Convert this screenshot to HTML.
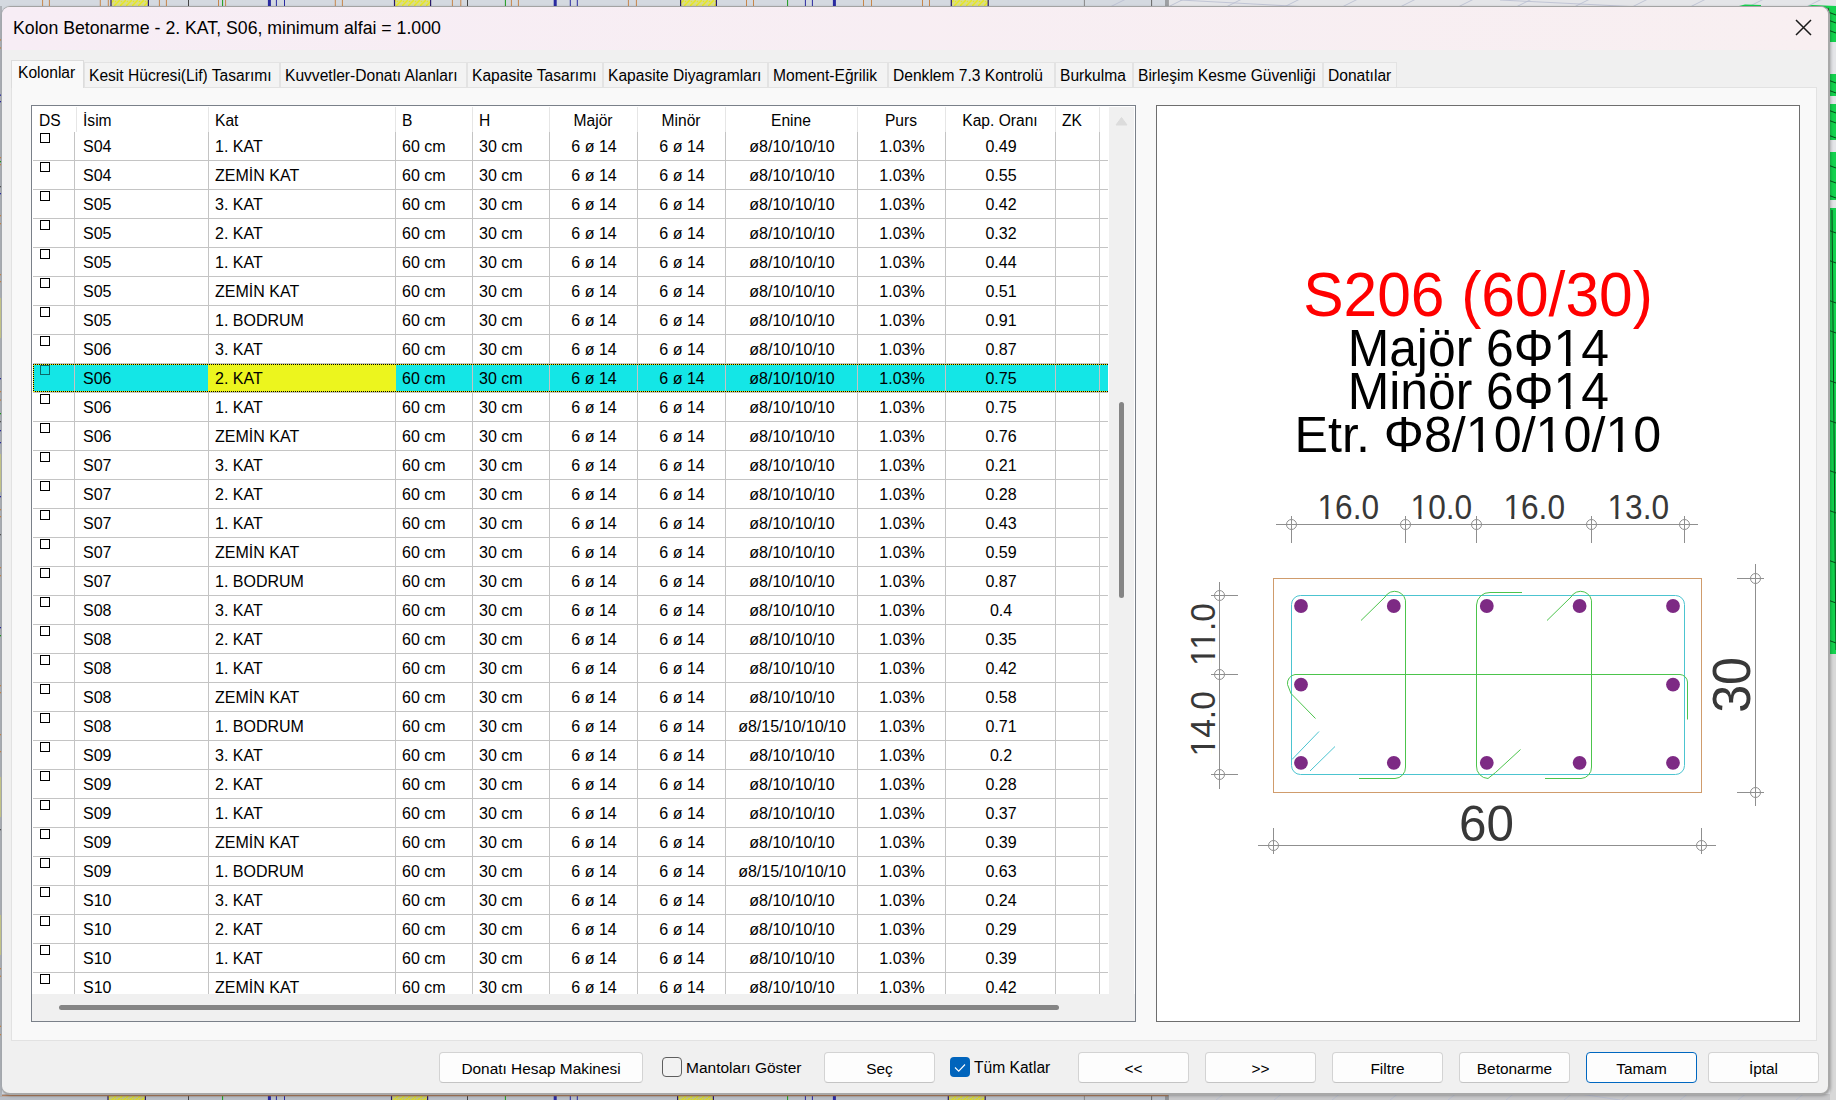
<!DOCTYPE html><html><head><meta charset="utf-8"><style>
*{box-sizing:border-box;margin:0;padding:0}
html,body{width:1836px;height:1100px;overflow:hidden}
body{position:relative;background:#c3c8cf;font-family:"Liberation Sans",sans-serif;color:#000}
.a{position:absolute}
.t{position:absolute;white-space:nowrap}
#dlg{position:absolute;left:1px;top:6px;width:1829px;height:1089px;border-radius:9px;background:#f0f0f0;border:1px solid #a3a3a3;border-right:2px solid #a8a8a8;border-bottom:2px solid #a8a8a8;border-left:1px solid #a3a7ac;box-shadow:1px 1px 3px rgba(0,0,0,.25)}
#title{position:absolute;left:2px;top:7px;width:1826px;height:43px;background:linear-gradient(90deg,#f7edf5,#f8eff1);border-radius:8px 8px 0 0}
.tab{position:absolute;top:62px;height:25px;background:#f3f3f3;border:1px solid #e3e3e3;border-bottom:none;font-size:15.6px;line-height:25px;white-space:nowrap}
.tab.sel{top:60px;height:28px;line-height:24px;background:#f9f9f9;border-color:#dcdcdc;z-index:2}
#panel{position:absolute;left:11px;top:87px;width:1806px;height:954px;background:#f9f9f9;border:1px solid #e2e2e2}
#grid{position:absolute;left:31px;top:105px;width:1105px;height:917px;border:1px solid #7a8089;background:#fff;overflow:hidden}
.row{position:absolute;left:33px;width:1075px;height:29px;font-size:16px;line-height:28px}
.hl{position:absolute;left:33px;width:1075px;height:1px;background:#c4c4c4}
.vl{position:absolute;width:1px;background:#c4c4c4}
.hv{position:absolute;top:107px;width:1px;height:25px;background:#e6e6e6}
.hd{position:absolute;top:108px;font-size:15.6px;line-height:25px;white-space:nowrap}
.c{position:absolute;white-space:nowrap;font-size:16px;line-height:28px}
.cb{position:absolute;width:10px;height:10px;border:1px solid #000}
.btn{position:absolute;top:1052px;height:31px;background:#fdfdfd;border:1px solid #d3d3d3;border-bottom-color:#c4c4c4;border-radius:4px;font-size:15.4px;line-height:31px;text-align:center;white-space:nowrap}
</style></head><body>
<svg class="a" style="left:0;top:0" width="1836" height="1100">
<defs><pattern id="hat" width="6" height="6" patternUnits="userSpaceOnUse"><rect width="6" height="6" fill="#d9dc8a"/><path d="M0 6L6 0" stroke="#e8e820" stroke-width="1.5"/><circle cx="1.5" cy="1.5" r=".8" fill="#e8e820"/></pattern><pattern id="hat2" width="6" height="6" patternUnits="userSpaceOnUse"><rect width="6" height="6" fill="#c2c47e"/><path d="M0 6L6 0" stroke="#dada20" stroke-width="1.5"/><circle cx="1.5" cy="1.5" r=".8" fill="#dada20"/></pattern></defs>
<rect x="0" y="0" width="1836" height="1100" fill="#d4d9e0"/>
<rect x="1168" y="0" width="668" height="1100" fill="#e4e5e8"/>
<rect x="0" y="1094" width="1168" height="6" fill="#b9bec6"/>
<rect x="1168" y="1094" width="668" height="6" fill="#c8c8ca"/>
<rect x="1830" y="650" width="6" height="450" fill="#d8d8d8"/>
<path d="M1100 12L1140 -8M1100 1100L1125 1080" stroke="#b8bcd0" stroke-width="0.8"/>
<path d="M1158 12L1198 -8M1158 1100L1183 1080" stroke="#b8bcd0" stroke-width="0.8"/>
<path d="M1216 12L1256 -8M1216 1100L1241 1080" stroke="#b8bcd0" stroke-width="0.8"/>
<path d="M1274 12L1314 -8M1274 1100L1299 1080" stroke="#b8bcd0" stroke-width="0.8"/>
<path d="M1332 12L1372 -8M1332 1100L1357 1080" stroke="#b8bcd0" stroke-width="0.8"/>
<path d="M1390 12L1430 -8M1390 1100L1415 1080" stroke="#b8bcd0" stroke-width="0.8"/>
<path d="M1448 12L1488 -8M1448 1100L1473 1080" stroke="#b8bcd0" stroke-width="0.8"/>
<path d="M1506 12L1546 -8M1506 1100L1531 1080" stroke="#b8bcd0" stroke-width="0.8"/>
<path d="M1564 12L1604 -8M1564 1100L1589 1080" stroke="#b8bcd0" stroke-width="0.8"/>
<path d="M1622 12L1662 -8M1622 1100L1647 1080" stroke="#b8bcd0" stroke-width="0.8"/>
<path d="M1680 12L1720 -8M1680 1100L1705 1080" stroke="#b8bcd0" stroke-width="0.8"/>
<path d="M1738 12L1778 -8M1738 1100L1763 1080" stroke="#b8bcd0" stroke-width="0.8"/>
<path d="M1796 12L1836 -8M1796 1100L1821 1080" stroke="#b8bcd0" stroke-width="0.8"/>
<path d="M1854 12L1894 -8M1854 1100L1879 1080" stroke="#b8bcd0" stroke-width="0.8"/>
<path d="M1912 12L1952 -8M1912 1100L1937 1080" stroke="#b8bcd0" stroke-width="0.8"/>
<path d="M1970 12L2010 -8M1970 1100L1995 1080" stroke="#b8bcd0" stroke-width="0.8"/>
<path d="M2028 12L2068 -8M2028 1100L2053 1080" stroke="#b8bcd0" stroke-width="0.8"/>
<path d="M2086 12L2126 -8M2086 1100L2111 1080" stroke="#b8bcd0" stroke-width="0.8"/>
<path d="M2144 12L2184 -8M2144 1100L2169 1080" stroke="#b8bcd0" stroke-width="0.8"/>
<path d="M2202 12L2242 -8M2202 1100L2227 1080" stroke="#b8bcd0" stroke-width="0.8"/>
<path d="M2260 12L2300 -8M2260 1100L2285 1080" stroke="#b8bcd0" stroke-width="0.8"/>
<path d="M2318 12L2358 -8M2318 1100L2343 1080" stroke="#b8bcd0" stroke-width="0.8"/>
<path d="M2376 12L2416 -8M2376 1100L2401 1080" stroke="#b8bcd0" stroke-width="0.8"/>
<path d="M2434 12L2474 -8M2434 1100L2459 1080" stroke="#b8bcd0" stroke-width="0.8"/>
<path d="M2492 12L2532 -8M2492 1100L2517 1080" stroke="#b8bcd0" stroke-width="0.8"/>
<path d="M2550 12L2590 -8M2550 1100L2575 1080" stroke="#b8bcd0" stroke-width="0.8"/>
<path d="M2608 12L2648 -8M2608 1100L2633 1080" stroke="#b8bcd0" stroke-width="0.8"/>
<path d="M2666 12L2706 -8M2666 1100L2691 1080" stroke="#b8bcd0" stroke-width="0.8"/>
<path d="M2724 12L2764 -8M2724 1100L2749 1080" stroke="#b8bcd0" stroke-width="0.8"/>
<path d="M2782 12L2822 -8M2782 1100L2807 1080" stroke="#b8bcd0" stroke-width="0.8"/>
<path d="M1180 0L1400 12M1500 0L1700 10M1540 1088L1620 1100" stroke="#b8bcd0" stroke-width="0.8"/>
<path d="M42.6 0V8" stroke="#c8864a" stroke-width="1"/>
<path d="M49.4 0V8" stroke="#c8864a" stroke-width="1"/>
<path d="M100.3 0V8" stroke="#c8864a" stroke-width="1"/>
<path d="M108.3 0V8" stroke="#c8864a" stroke-width="1"/>
<path d="M159.4 0V8" stroke="#c8864a" stroke-width="1"/>
<path d="M166.4 0V8" stroke="#c8864a" stroke-width="1"/>
<path d="M218.5 0V8" stroke="#c8864a" stroke-width="1"/>
<path d="M225.6 0V8" stroke="#c8864a" stroke-width="1"/>
<path d="M335.3 0V8" stroke="#c8864a" stroke-width="1"/>
<path d="M342.4 0V8" stroke="#c8864a" stroke-width="1"/>
<path d="M452.4 0V8" stroke="#c8864a" stroke-width="1"/>
<path d="M460.8 0V8" stroke="#c8864a" stroke-width="1"/>
<path d="M511.4 0V8" stroke="#c8864a" stroke-width="1"/>
<path d="M518.4 0V8" stroke="#c8864a" stroke-width="1"/>
<path d="M628.4 0V8" stroke="#c8864a" stroke-width="1"/>
<path d="M636.4 0V8" stroke="#c8864a" stroke-width="1"/>
<path d="M746.5 0V8" stroke="#c8864a" stroke-width="1"/>
<path d="M753.5 0V8" stroke="#c8864a" stroke-width="1"/>
<path d="M863.5 0V8" stroke="#c8864a" stroke-width="1"/>
<path d="M871.5 0V8" stroke="#c8864a" stroke-width="1"/>
<path d="M922.5 0V8" stroke="#c8864a" stroke-width="1"/>
<path d="M929.5 0V8" stroke="#c8864a" stroke-width="1"/>
<rect x="111" y="-1" width="37.400000000000006" height="9" fill="url(#hat)" stroke="#2a1a6a" stroke-width="1.2"/>
<rect x="108" y="1092" width="37.400000000000006" height="10" fill="url(#hat2)" stroke="#2a1a6a" stroke-width="1.2"/>
<rect x="394.5" y="-1" width="36.10000000000002" height="9" fill="url(#hat)" stroke="#2a1a6a" stroke-width="1.2"/>
<rect x="391.5" y="1092" width="36.10000000000002" height="10" fill="url(#hat2)" stroke="#2a1a6a" stroke-width="1.2"/>
<rect x="680.6" y="-1" width="35.799999999999955" height="9" fill="url(#hat)" stroke="#2a1a6a" stroke-width="1.2"/>
<rect x="677.6" y="1092" width="35.799999999999955" height="10" fill="url(#hat2)" stroke="#2a1a6a" stroke-width="1.2"/>
<rect x="951.3" y="-1" width="36.90000000000009" height="9" fill="url(#hat)" stroke="#2a1a6a" stroke-width="1.2"/>
<rect x="948.3" y="1092" width="36.90000000000009" height="10" fill="url(#hat2)" stroke="#2a1a6a" stroke-width="1.2"/>
<path d="M188.5 0V8M188.5 1090V1100" stroke="#444" stroke-width="1"/>
<path d="M222.6 0V8M222.6 1090V1100" stroke="#1a9a1a" stroke-width="1"/>
<path d="M269.4 0V8M269.4 1090V1100" stroke="#2a2aa0" stroke-width="3"/>
<path d="M276.4 0V8M276.4 1090V1100" stroke="#2a2aa0" stroke-width="1"/>
<path d="M284.5 0V8M284.5 1090V1100" stroke="#2a2aa0" stroke-width="1"/>
<path d="M467.5 0V8M467.5 1090V1100" stroke="#444" stroke-width="1"/>
<path d="M505.4 0V8M505.4 1090V1100" stroke="#1a9a1a" stroke-width="1"/>
<path d="M555.2 0V8M555.2 1090V1100" stroke="#2a2aa0" stroke-width="3"/>
<path d="M570.3 0V8M570.3 1090V1100" stroke="#2a2aa0" stroke-width="1"/>
<path d="M577.3 0V8M577.3 1090V1100" stroke="#2a2aa0" stroke-width="1"/>
<path d="M787.6 0V8M787.6 1090V1100" stroke="#1a9a1a" stroke-width="1"/>
<path d="M805.4 0V8M805.4 1090V1100" stroke="#2a2aa0" stroke-width="1"/>
<path d="M812.4 0V8M812.4 1090V1100" stroke="#2a2aa0" stroke-width="1"/>
<path d="M834.4 0V8M834.4 1090V1100" stroke="#2a2aa0" stroke-width="3"/>
<path d="M1084.4 0V8M1084.4 1090V1100" stroke="#888" stroke-width="1"/>
<path d="M1151.6 0V8M1151.6 1090V1100" stroke="#666" stroke-width="1"/>
<path d="M1166 0V8M1166 1090V1100" stroke="#666" stroke-width="1"/>
<path d="M1168 0V8M1168 1090V1100" stroke="#666" stroke-width="1"/>
<path d="M0 1095.5H1168" stroke="#b08060" stroke-width="1.5"/>
<rect x="1829" y="8" width="7" height="34" fill="#14d24e"/>
<rect x="1829" y="74" width="7" height="22" fill="#14d24e"/>
<rect x="1829" y="104" width="7" height="36" fill="#14d24e"/>
<rect x="1829" y="152" width="7" height="48" fill="#14d24e"/>
<rect x="1829" y="208" width="7" height="446" fill="#14d24e"/>
<path d="M1828 12L1836 15" stroke="#0a4a1a" stroke-width="1"/>
<path d="M1828 20L1836 23" stroke="#0a4a1a" stroke-width="1"/>
<path d="M1828 30L1836 33" stroke="#0a4a1a" stroke-width="1"/>
<path d="M1828 80L1836 83" stroke="#0a4a1a" stroke-width="1"/>
<path d="M1828 90L1836 93" stroke="#0a4a1a" stroke-width="1"/>
<path d="M1828 110L1836 113" stroke="#0a4a1a" stroke-width="1"/>
<path d="M1828 120L1836 123" stroke="#0a4a1a" stroke-width="1"/>
<path d="M1828 135L1836 138" stroke="#0a4a1a" stroke-width="1"/>
<path d="M1828 165L1836 168" stroke="#0a4a1a" stroke-width="1"/>
<path d="M1828 180L1836 183" stroke="#0a4a1a" stroke-width="1"/>
<path d="M1828 195L1836 198" stroke="#0a4a1a" stroke-width="1"/>
<path d="M1828 230L1836 233" stroke="#0a4a1a" stroke-width="1"/>
<path d="M1828 260L1836 263" stroke="#0a4a1a" stroke-width="1"/>
<path d="M1828 300L1836 303" stroke="#0a4a1a" stroke-width="1"/>
<path d="M1828 330L1836 333" stroke="#0a4a1a" stroke-width="1"/>
<path d="M1828 380L1836 383" stroke="#0a4a1a" stroke-width="1"/>
<path d="M1828 420L1836 423" stroke="#0a4a1a" stroke-width="1"/>
<path d="M1828 470L1836 473" stroke="#0a4a1a" stroke-width="1"/>
<path d="M1828 510L1836 513" stroke="#0a4a1a" stroke-width="1"/>
<path d="M1828 560L1836 563" stroke="#0a4a1a" stroke-width="1"/>
<path d="M1828 600L1836 603" stroke="#0a4a1a" stroke-width="1"/>
<path d="M1828 640L1836 643" stroke="#0a4a1a" stroke-width="1"/>
<path d="M1832 210L1836 650" stroke="#0a4a1a" stroke-width="1"/>
<path d="M1737 6.5L1745 4.5L1761 5L1761 6.5Z" fill="#14d24e"/>
<path d="M1806 6.5L1812 5L1836 6L1836 9L1828 9Z" fill="#14d24e"/>
<path d="M1828.5 8V654" stroke="#3a5a3a" stroke-width="1"/>
<rect x="0" y="6" width="2" height="1090" fill="#aeb2b8"/>
<rect x="0" y="39.3" width="2" height="1.3" fill="#c8864a"/>
<rect x="0" y="47.3" width="2" height="1.3" fill="#c8864a"/>
<rect x="0" y="94.5" width="2" height="1.3" fill="#2a2aa0"/>
<rect x="0" y="101" width="2" height="1.3" fill="#2a2aa0"/>
<rect x="0" y="157" width="2" height="1.3" fill="#c8864a"/>
<rect x="0" y="164" width="2" height="1.3" fill="#c8864a"/>
<rect x="0" y="161" width="2" height="1.3" fill="#1a9a1a"/>
<rect x="0" y="186" width="2" height="1.3" fill="#555"/>
<rect x="0" y="193" width="2" height="1.3" fill="#2a2aa0"/>
<rect x="0" y="215" width="2" height="1.3" fill="#c8864a"/>
<rect x="0" y="223" width="2" height="1.3" fill="#c8864a"/>
<rect x="0" y="274" width="2" height="1.3" fill="#c8864a"/>
<rect x="0" y="281" width="2" height="1.3" fill="#c8864a"/>
<rect x="0" y="378" width="2" height="1.3" fill="#2a2aa0"/>
<rect x="0" y="391" width="2" height="1.3" fill="#c8864a"/>
<rect x="0" y="399.4" width="2" height="1.3" fill="#c8864a"/>
<rect x="0" y="413" width="2" height="1.3" fill="#1a9a1a"/>
<rect x="0" y="421" width="2" height="1.3" fill="#555"/>
<rect x="0" y="430" width="2" height="1.3" fill="#2a2aa0"/>
<rect x="0" y="442" width="2" height="1.3" fill="#2a2aa0"/>
<rect x="0" y="496" width="2" height="1.3" fill="#2a2aa0"/>
<rect x="0" y="509" width="2" height="1.3" fill="#c8864a"/>
<rect x="0" y="516" width="2" height="1.3" fill="#c8864a"/>
<rect x="0" y="534" width="2" height="1.3" fill="#555"/>
<rect x="0" y="567" width="2" height="1.3" fill="#c8864a"/>
<rect x="0" y="575" width="2" height="1.3" fill="#c8864a"/>
<rect x="0" y="627" width="2" height="1.3" fill="#2a2aa0"/>
<rect x="0" y="635" width="2" height="1.3" fill="#1a9a1a"/>
<rect x="0" y="685" width="2" height="1.3" fill="#c8864a"/>
<rect x="0" y="692" width="2" height="1.3" fill="#c8864a"/>
<rect x="0" y="734" width="2" height="1.3" fill="#c8864a"/>
<rect x="0" y="751" width="2" height="1.3" fill="#c8864a"/>
<rect x="0" y="829" width="2" height="1.3" fill="#555"/>
<rect x="0" y="968" width="2" height="1.3" fill="#c8864a"/>
<rect x="0" y="975.6" width="2" height="1.3" fill="#c8864a"/>
<rect x="0" y="1025.7" width="2" height="1.3" fill="#c8864a"/>
<rect x="0" y="1034" width="2" height="1.3" fill="#c8864a"/>
<rect x="0" y="298" width="2" height="40" fill="#c9c98a"/>
<rect x="0" y="454" width="2" height="38" fill="#c9c98a"/>
<rect x="0" y="777" width="2" height="40" fill="#c9c98a"/>
<rect x="0" y="915" width="2" height="40" fill="#c9c98a"/>
</svg>
<div id="dlg"></div>
<div id="title"></div>
<div class="t" style="left:13px;top:18px;font-size:17.7px;line-height:20px">Kolon Betonarme - 2. KAT, S06, minimum alfai = 1.000</div>
<svg class="a" style="left:1795px;top:19px" width="17" height="17"><path d="M1 1L16 16M16 1L1 16" stroke="#1a1a1a" stroke-width="1.5"/></svg>
<div id="panel"></div>
<div class="tab sel" style="left:11px;width:73px;padding-left:6px">Kolonlar</div>
<div class="tab" style="left:84px;width:196px;padding-left:4px">Kesit Hücresi(Lif) Tasarımı</div>
<div class="tab" style="left:280px;width:187px;padding-left:4px">Kuvvetler-Donatı Alanları</div>
<div class="tab" style="left:467px;width:136px;padding-left:4px">Kapasite Tasarımı</div>
<div class="tab" style="left:603px;width:165px;padding-left:4px">Kapasite Diyagramları</div>
<div class="tab" style="left:768px;width:120px;padding-left:4px">Moment-Eğrilik</div>
<div class="tab" style="left:888px;width:167px;padding-left:4px">Denklem 7.3 Kontrolü</div>
<div class="tab" style="left:1055px;width:78px;padding-left:4px">Burkulma</div>
<div class="tab" style="left:1133px;width:190px;padding-left:4px">Birleşim Kesme Güvenliği</div>
<div class="tab" style="left:1323px;width:74px;padding-left:4px">Donatılar</div>
<div id="grid"></div>
<div class="hd" style="left:39px">DS</div>
<div class="hd" style="left:83px">İsim</div>
<div class="hd" style="left:215px">Kat</div>
<div class="hd" style="left:402px">B</div>
<div class="hd" style="left:479px">H</div>
<div class="hd" style="left:549px;width:88px;text-align:center">Majör</div>
<div class="hd" style="left:637px;width:88px;text-align:center">Minör</div>
<div class="hd" style="left:725px;width:132px;text-align:center">Enine</div>
<div class="hd" style="left:857px;width:88px;text-align:center">Purs</div>
<div class="hd" style="left:945px;width:110px;text-align:center">Kap. Oranı</div>
<div class="hd" style="left:1062px">ZK</div>
<div class="hv" style="left:76px"></div>
<div class="hv" style="left:208px"></div>
<div class="hv" style="left:395px"></div>
<div class="hv" style="left:472px"></div>
<div class="hv" style="left:549px"></div>
<div class="hv" style="left:637px"></div>
<div class="hv" style="left:725px"></div>
<div class="hv" style="left:857px"></div>
<div class="hv" style="left:945px"></div>
<div class="hv" style="left:1055px"></div>
<div class="hv" style="left:1099px"></div>
<div class="a" style="left:33px;top:364px;width:1075px;height:28px;background:#14e6e6"></div>
<div class="a" style="left:209px;top:364px;width:186px;height:28px;background:#eef51e"></div>
<div class="vl" style="left:74px;top:132px;height:862px"></div>
<div class="vl" style="left:208px;top:132px;height:862px"></div>
<div class="vl" style="left:395px;top:132px;height:862px"></div>
<div class="vl" style="left:472px;top:132px;height:862px"></div>
<div class="vl" style="left:549px;top:132px;height:862px"></div>
<div class="vl" style="left:637px;top:132px;height:862px"></div>
<div class="vl" style="left:725px;top:132px;height:862px"></div>
<div class="vl" style="left:857px;top:132px;height:862px"></div>
<div class="vl" style="left:945px;top:132px;height:862px"></div>
<div class="vl" style="left:1055px;top:132px;height:862px"></div>
<div class="vl" style="left:1099px;top:132px;height:862px"></div>
<div class="hl" style="top:160px"></div>
<div class="hl" style="top:189px"></div>
<div class="hl" style="top:218px"></div>
<div class="hl" style="top:247px"></div>
<div class="hl" style="top:276px"></div>
<div class="hl" style="top:305px"></div>
<div class="hl" style="top:334px"></div>
<div class="hl" style="top:363px"></div>
<div class="hl" style="top:392px"></div>
<div class="hl" style="top:421px"></div>
<div class="hl" style="top:450px"></div>
<div class="hl" style="top:479px"></div>
<div class="hl" style="top:508px"></div>
<div class="hl" style="top:537px"></div>
<div class="hl" style="top:566px"></div>
<div class="hl" style="top:595px"></div>
<div class="hl" style="top:624px"></div>
<div class="hl" style="top:653px"></div>
<div class="hl" style="top:682px"></div>
<div class="hl" style="top:711px"></div>
<div class="hl" style="top:740px"></div>
<div class="hl" style="top:769px"></div>
<div class="hl" style="top:798px"></div>
<div class="hl" style="top:827px"></div>
<div class="hl" style="top:856px"></div>
<div class="hl" style="top:885px"></div>
<div class="hl" style="top:914px"></div>
<div class="hl" style="top:943px"></div>
<div class="hl" style="top:972px"></div>
<div class="a" style="left:208px;top:364px;width:188px;height:28px;background:#ecf51e"></div>
<div class="a" style="left:33px;top:364px;width:1075px;height:1px;background:repeating-linear-gradient(90deg,#000 0 1px,#f0f000 1px 2px)"></div>
<div class="a" style="left:33px;top:391px;width:1075px;height:1px;background:repeating-linear-gradient(90deg,#000 0 1px,#f0f000 1px 2px)"></div>
<div class="a" style="left:33px;top:364px;width:1px;height:28px;background:repeating-linear-gradient(180deg,#000 0 1px,#f0f000 1px 2px)"></div>
<div class="cb" style="left:40px;top:133px;border-color:#000"></div>
<div class="c" style="left:83px;top:133px">S04</div>
<div class="c" style="left:215px;top:133px">1. KAT</div>
<div class="c" style="left:402px;top:133px">60 cm</div>
<div class="c" style="left:479px;top:133px">30 cm</div>
<div class="c" style="left:550px;width:88px;top:133px;text-align:center">6 ø 14</div>
<div class="c" style="left:638px;width:88px;top:133px;text-align:center">6 ø 14</div>
<div class="c" style="left:726px;width:132px;top:133px;text-align:center">ø8/10/10/10</div>
<div class="c" style="left:858px;width:88px;top:133px;text-align:center">1.03%</div>
<div class="c" style="left:946px;width:110px;top:133px;text-align:center">0.49</div>
<div class="cb" style="left:40px;top:162px;border-color:#000"></div>
<div class="c" style="left:83px;top:162px">S04</div>
<div class="c" style="left:215px;top:162px">ZEMİN KAT</div>
<div class="c" style="left:402px;top:162px">60 cm</div>
<div class="c" style="left:479px;top:162px">30 cm</div>
<div class="c" style="left:550px;width:88px;top:162px;text-align:center">6 ø 14</div>
<div class="c" style="left:638px;width:88px;top:162px;text-align:center">6 ø 14</div>
<div class="c" style="left:726px;width:132px;top:162px;text-align:center">ø8/10/10/10</div>
<div class="c" style="left:858px;width:88px;top:162px;text-align:center">1.03%</div>
<div class="c" style="left:946px;width:110px;top:162px;text-align:center">0.55</div>
<div class="cb" style="left:40px;top:191px;border-color:#000"></div>
<div class="c" style="left:83px;top:191px">S05</div>
<div class="c" style="left:215px;top:191px">3. KAT</div>
<div class="c" style="left:402px;top:191px">60 cm</div>
<div class="c" style="left:479px;top:191px">30 cm</div>
<div class="c" style="left:550px;width:88px;top:191px;text-align:center">6 ø 14</div>
<div class="c" style="left:638px;width:88px;top:191px;text-align:center">6 ø 14</div>
<div class="c" style="left:726px;width:132px;top:191px;text-align:center">ø8/10/10/10</div>
<div class="c" style="left:858px;width:88px;top:191px;text-align:center">1.03%</div>
<div class="c" style="left:946px;width:110px;top:191px;text-align:center">0.42</div>
<div class="cb" style="left:40px;top:220px;border-color:#000"></div>
<div class="c" style="left:83px;top:220px">S05</div>
<div class="c" style="left:215px;top:220px">2. KAT</div>
<div class="c" style="left:402px;top:220px">60 cm</div>
<div class="c" style="left:479px;top:220px">30 cm</div>
<div class="c" style="left:550px;width:88px;top:220px;text-align:center">6 ø 14</div>
<div class="c" style="left:638px;width:88px;top:220px;text-align:center">6 ø 14</div>
<div class="c" style="left:726px;width:132px;top:220px;text-align:center">ø8/10/10/10</div>
<div class="c" style="left:858px;width:88px;top:220px;text-align:center">1.03%</div>
<div class="c" style="left:946px;width:110px;top:220px;text-align:center">0.32</div>
<div class="cb" style="left:40px;top:249px;border-color:#000"></div>
<div class="c" style="left:83px;top:249px">S05</div>
<div class="c" style="left:215px;top:249px">1. KAT</div>
<div class="c" style="left:402px;top:249px">60 cm</div>
<div class="c" style="left:479px;top:249px">30 cm</div>
<div class="c" style="left:550px;width:88px;top:249px;text-align:center">6 ø 14</div>
<div class="c" style="left:638px;width:88px;top:249px;text-align:center">6 ø 14</div>
<div class="c" style="left:726px;width:132px;top:249px;text-align:center">ø8/10/10/10</div>
<div class="c" style="left:858px;width:88px;top:249px;text-align:center">1.03%</div>
<div class="c" style="left:946px;width:110px;top:249px;text-align:center">0.44</div>
<div class="cb" style="left:40px;top:278px;border-color:#000"></div>
<div class="c" style="left:83px;top:278px">S05</div>
<div class="c" style="left:215px;top:278px">ZEMİN KAT</div>
<div class="c" style="left:402px;top:278px">60 cm</div>
<div class="c" style="left:479px;top:278px">30 cm</div>
<div class="c" style="left:550px;width:88px;top:278px;text-align:center">6 ø 14</div>
<div class="c" style="left:638px;width:88px;top:278px;text-align:center">6 ø 14</div>
<div class="c" style="left:726px;width:132px;top:278px;text-align:center">ø8/10/10/10</div>
<div class="c" style="left:858px;width:88px;top:278px;text-align:center">1.03%</div>
<div class="c" style="left:946px;width:110px;top:278px;text-align:center">0.51</div>
<div class="cb" style="left:40px;top:307px;border-color:#000"></div>
<div class="c" style="left:83px;top:307px">S05</div>
<div class="c" style="left:215px;top:307px">1. BODRUM</div>
<div class="c" style="left:402px;top:307px">60 cm</div>
<div class="c" style="left:479px;top:307px">30 cm</div>
<div class="c" style="left:550px;width:88px;top:307px;text-align:center">6 ø 14</div>
<div class="c" style="left:638px;width:88px;top:307px;text-align:center">6 ø 14</div>
<div class="c" style="left:726px;width:132px;top:307px;text-align:center">ø8/10/10/10</div>
<div class="c" style="left:858px;width:88px;top:307px;text-align:center">1.03%</div>
<div class="c" style="left:946px;width:110px;top:307px;text-align:center">0.91</div>
<div class="cb" style="left:40px;top:336px;border-color:#000"></div>
<div class="c" style="left:83px;top:336px">S06</div>
<div class="c" style="left:215px;top:336px">3. KAT</div>
<div class="c" style="left:402px;top:336px">60 cm</div>
<div class="c" style="left:479px;top:336px">30 cm</div>
<div class="c" style="left:550px;width:88px;top:336px;text-align:center">6 ø 14</div>
<div class="c" style="left:638px;width:88px;top:336px;text-align:center">6 ø 14</div>
<div class="c" style="left:726px;width:132px;top:336px;text-align:center">ø8/10/10/10</div>
<div class="c" style="left:858px;width:88px;top:336px;text-align:center">1.03%</div>
<div class="c" style="left:946px;width:110px;top:336px;text-align:center">0.87</div>
<div class="cb" style="left:40px;top:365px;border-color:#0b6a6a"></div>
<div class="c" style="left:83px;top:365px">S06</div>
<div class="c" style="left:215px;top:365px">2. KAT</div>
<div class="c" style="left:402px;top:365px">60 cm</div>
<div class="c" style="left:479px;top:365px">30 cm</div>
<div class="c" style="left:550px;width:88px;top:365px;text-align:center">6 ø 14</div>
<div class="c" style="left:638px;width:88px;top:365px;text-align:center">6 ø 14</div>
<div class="c" style="left:726px;width:132px;top:365px;text-align:center">ø8/10/10/10</div>
<div class="c" style="left:858px;width:88px;top:365px;text-align:center">1.03%</div>
<div class="c" style="left:946px;width:110px;top:365px;text-align:center">0.75</div>
<div class="cb" style="left:40px;top:394px;border-color:#000"></div>
<div class="c" style="left:83px;top:394px">S06</div>
<div class="c" style="left:215px;top:394px">1. KAT</div>
<div class="c" style="left:402px;top:394px">60 cm</div>
<div class="c" style="left:479px;top:394px">30 cm</div>
<div class="c" style="left:550px;width:88px;top:394px;text-align:center">6 ø 14</div>
<div class="c" style="left:638px;width:88px;top:394px;text-align:center">6 ø 14</div>
<div class="c" style="left:726px;width:132px;top:394px;text-align:center">ø8/10/10/10</div>
<div class="c" style="left:858px;width:88px;top:394px;text-align:center">1.03%</div>
<div class="c" style="left:946px;width:110px;top:394px;text-align:center">0.75</div>
<div class="cb" style="left:40px;top:423px;border-color:#000"></div>
<div class="c" style="left:83px;top:423px">S06</div>
<div class="c" style="left:215px;top:423px">ZEMİN KAT</div>
<div class="c" style="left:402px;top:423px">60 cm</div>
<div class="c" style="left:479px;top:423px">30 cm</div>
<div class="c" style="left:550px;width:88px;top:423px;text-align:center">6 ø 14</div>
<div class="c" style="left:638px;width:88px;top:423px;text-align:center">6 ø 14</div>
<div class="c" style="left:726px;width:132px;top:423px;text-align:center">ø8/10/10/10</div>
<div class="c" style="left:858px;width:88px;top:423px;text-align:center">1.03%</div>
<div class="c" style="left:946px;width:110px;top:423px;text-align:center">0.76</div>
<div class="cb" style="left:40px;top:452px;border-color:#000"></div>
<div class="c" style="left:83px;top:452px">S07</div>
<div class="c" style="left:215px;top:452px">3. KAT</div>
<div class="c" style="left:402px;top:452px">60 cm</div>
<div class="c" style="left:479px;top:452px">30 cm</div>
<div class="c" style="left:550px;width:88px;top:452px;text-align:center">6 ø 14</div>
<div class="c" style="left:638px;width:88px;top:452px;text-align:center">6 ø 14</div>
<div class="c" style="left:726px;width:132px;top:452px;text-align:center">ø8/10/10/10</div>
<div class="c" style="left:858px;width:88px;top:452px;text-align:center">1.03%</div>
<div class="c" style="left:946px;width:110px;top:452px;text-align:center">0.21</div>
<div class="cb" style="left:40px;top:481px;border-color:#000"></div>
<div class="c" style="left:83px;top:481px">S07</div>
<div class="c" style="left:215px;top:481px">2. KAT</div>
<div class="c" style="left:402px;top:481px">60 cm</div>
<div class="c" style="left:479px;top:481px">30 cm</div>
<div class="c" style="left:550px;width:88px;top:481px;text-align:center">6 ø 14</div>
<div class="c" style="left:638px;width:88px;top:481px;text-align:center">6 ø 14</div>
<div class="c" style="left:726px;width:132px;top:481px;text-align:center">ø8/10/10/10</div>
<div class="c" style="left:858px;width:88px;top:481px;text-align:center">1.03%</div>
<div class="c" style="left:946px;width:110px;top:481px;text-align:center">0.28</div>
<div class="cb" style="left:40px;top:510px;border-color:#000"></div>
<div class="c" style="left:83px;top:510px">S07</div>
<div class="c" style="left:215px;top:510px">1. KAT</div>
<div class="c" style="left:402px;top:510px">60 cm</div>
<div class="c" style="left:479px;top:510px">30 cm</div>
<div class="c" style="left:550px;width:88px;top:510px;text-align:center">6 ø 14</div>
<div class="c" style="left:638px;width:88px;top:510px;text-align:center">6 ø 14</div>
<div class="c" style="left:726px;width:132px;top:510px;text-align:center">ø8/10/10/10</div>
<div class="c" style="left:858px;width:88px;top:510px;text-align:center">1.03%</div>
<div class="c" style="left:946px;width:110px;top:510px;text-align:center">0.43</div>
<div class="cb" style="left:40px;top:539px;border-color:#000"></div>
<div class="c" style="left:83px;top:539px">S07</div>
<div class="c" style="left:215px;top:539px">ZEMİN KAT</div>
<div class="c" style="left:402px;top:539px">60 cm</div>
<div class="c" style="left:479px;top:539px">30 cm</div>
<div class="c" style="left:550px;width:88px;top:539px;text-align:center">6 ø 14</div>
<div class="c" style="left:638px;width:88px;top:539px;text-align:center">6 ø 14</div>
<div class="c" style="left:726px;width:132px;top:539px;text-align:center">ø8/10/10/10</div>
<div class="c" style="left:858px;width:88px;top:539px;text-align:center">1.03%</div>
<div class="c" style="left:946px;width:110px;top:539px;text-align:center">0.59</div>
<div class="cb" style="left:40px;top:568px;border-color:#000"></div>
<div class="c" style="left:83px;top:568px">S07</div>
<div class="c" style="left:215px;top:568px">1. BODRUM</div>
<div class="c" style="left:402px;top:568px">60 cm</div>
<div class="c" style="left:479px;top:568px">30 cm</div>
<div class="c" style="left:550px;width:88px;top:568px;text-align:center">6 ø 14</div>
<div class="c" style="left:638px;width:88px;top:568px;text-align:center">6 ø 14</div>
<div class="c" style="left:726px;width:132px;top:568px;text-align:center">ø8/10/10/10</div>
<div class="c" style="left:858px;width:88px;top:568px;text-align:center">1.03%</div>
<div class="c" style="left:946px;width:110px;top:568px;text-align:center">0.87</div>
<div class="cb" style="left:40px;top:597px;border-color:#000"></div>
<div class="c" style="left:83px;top:597px">S08</div>
<div class="c" style="left:215px;top:597px">3. KAT</div>
<div class="c" style="left:402px;top:597px">60 cm</div>
<div class="c" style="left:479px;top:597px">30 cm</div>
<div class="c" style="left:550px;width:88px;top:597px;text-align:center">6 ø 14</div>
<div class="c" style="left:638px;width:88px;top:597px;text-align:center">6 ø 14</div>
<div class="c" style="left:726px;width:132px;top:597px;text-align:center">ø8/10/10/10</div>
<div class="c" style="left:858px;width:88px;top:597px;text-align:center">1.03%</div>
<div class="c" style="left:946px;width:110px;top:597px;text-align:center">0.4</div>
<div class="cb" style="left:40px;top:626px;border-color:#000"></div>
<div class="c" style="left:83px;top:626px">S08</div>
<div class="c" style="left:215px;top:626px">2. KAT</div>
<div class="c" style="left:402px;top:626px">60 cm</div>
<div class="c" style="left:479px;top:626px">30 cm</div>
<div class="c" style="left:550px;width:88px;top:626px;text-align:center">6 ø 14</div>
<div class="c" style="left:638px;width:88px;top:626px;text-align:center">6 ø 14</div>
<div class="c" style="left:726px;width:132px;top:626px;text-align:center">ø8/10/10/10</div>
<div class="c" style="left:858px;width:88px;top:626px;text-align:center">1.03%</div>
<div class="c" style="left:946px;width:110px;top:626px;text-align:center">0.35</div>
<div class="cb" style="left:40px;top:655px;border-color:#000"></div>
<div class="c" style="left:83px;top:655px">S08</div>
<div class="c" style="left:215px;top:655px">1. KAT</div>
<div class="c" style="left:402px;top:655px">60 cm</div>
<div class="c" style="left:479px;top:655px">30 cm</div>
<div class="c" style="left:550px;width:88px;top:655px;text-align:center">6 ø 14</div>
<div class="c" style="left:638px;width:88px;top:655px;text-align:center">6 ø 14</div>
<div class="c" style="left:726px;width:132px;top:655px;text-align:center">ø8/10/10/10</div>
<div class="c" style="left:858px;width:88px;top:655px;text-align:center">1.03%</div>
<div class="c" style="left:946px;width:110px;top:655px;text-align:center">0.42</div>
<div class="cb" style="left:40px;top:684px;border-color:#000"></div>
<div class="c" style="left:83px;top:684px">S08</div>
<div class="c" style="left:215px;top:684px">ZEMİN KAT</div>
<div class="c" style="left:402px;top:684px">60 cm</div>
<div class="c" style="left:479px;top:684px">30 cm</div>
<div class="c" style="left:550px;width:88px;top:684px;text-align:center">6 ø 14</div>
<div class="c" style="left:638px;width:88px;top:684px;text-align:center">6 ø 14</div>
<div class="c" style="left:726px;width:132px;top:684px;text-align:center">ø8/10/10/10</div>
<div class="c" style="left:858px;width:88px;top:684px;text-align:center">1.03%</div>
<div class="c" style="left:946px;width:110px;top:684px;text-align:center">0.58</div>
<div class="cb" style="left:40px;top:713px;border-color:#000"></div>
<div class="c" style="left:83px;top:713px">S08</div>
<div class="c" style="left:215px;top:713px">1. BODRUM</div>
<div class="c" style="left:402px;top:713px">60 cm</div>
<div class="c" style="left:479px;top:713px">30 cm</div>
<div class="c" style="left:550px;width:88px;top:713px;text-align:center">6 ø 14</div>
<div class="c" style="left:638px;width:88px;top:713px;text-align:center">6 ø 14</div>
<div class="c" style="left:726px;width:132px;top:713px;text-align:center">ø8/15/10/10/10</div>
<div class="c" style="left:858px;width:88px;top:713px;text-align:center">1.03%</div>
<div class="c" style="left:946px;width:110px;top:713px;text-align:center">0.71</div>
<div class="cb" style="left:40px;top:742px;border-color:#000"></div>
<div class="c" style="left:83px;top:742px">S09</div>
<div class="c" style="left:215px;top:742px">3. KAT</div>
<div class="c" style="left:402px;top:742px">60 cm</div>
<div class="c" style="left:479px;top:742px">30 cm</div>
<div class="c" style="left:550px;width:88px;top:742px;text-align:center">6 ø 14</div>
<div class="c" style="left:638px;width:88px;top:742px;text-align:center">6 ø 14</div>
<div class="c" style="left:726px;width:132px;top:742px;text-align:center">ø8/10/10/10</div>
<div class="c" style="left:858px;width:88px;top:742px;text-align:center">1.03%</div>
<div class="c" style="left:946px;width:110px;top:742px;text-align:center">0.2</div>
<div class="cb" style="left:40px;top:771px;border-color:#000"></div>
<div class="c" style="left:83px;top:771px">S09</div>
<div class="c" style="left:215px;top:771px">2. KAT</div>
<div class="c" style="left:402px;top:771px">60 cm</div>
<div class="c" style="left:479px;top:771px">30 cm</div>
<div class="c" style="left:550px;width:88px;top:771px;text-align:center">6 ø 14</div>
<div class="c" style="left:638px;width:88px;top:771px;text-align:center">6 ø 14</div>
<div class="c" style="left:726px;width:132px;top:771px;text-align:center">ø8/10/10/10</div>
<div class="c" style="left:858px;width:88px;top:771px;text-align:center">1.03%</div>
<div class="c" style="left:946px;width:110px;top:771px;text-align:center">0.28</div>
<div class="cb" style="left:40px;top:800px;border-color:#000"></div>
<div class="c" style="left:83px;top:800px">S09</div>
<div class="c" style="left:215px;top:800px">1. KAT</div>
<div class="c" style="left:402px;top:800px">60 cm</div>
<div class="c" style="left:479px;top:800px">30 cm</div>
<div class="c" style="left:550px;width:88px;top:800px;text-align:center">6 ø 14</div>
<div class="c" style="left:638px;width:88px;top:800px;text-align:center">6 ø 14</div>
<div class="c" style="left:726px;width:132px;top:800px;text-align:center">ø8/10/10/10</div>
<div class="c" style="left:858px;width:88px;top:800px;text-align:center">1.03%</div>
<div class="c" style="left:946px;width:110px;top:800px;text-align:center">0.37</div>
<div class="cb" style="left:40px;top:829px;border-color:#000"></div>
<div class="c" style="left:83px;top:829px">S09</div>
<div class="c" style="left:215px;top:829px">ZEMİN KAT</div>
<div class="c" style="left:402px;top:829px">60 cm</div>
<div class="c" style="left:479px;top:829px">30 cm</div>
<div class="c" style="left:550px;width:88px;top:829px;text-align:center">6 ø 14</div>
<div class="c" style="left:638px;width:88px;top:829px;text-align:center">6 ø 14</div>
<div class="c" style="left:726px;width:132px;top:829px;text-align:center">ø8/10/10/10</div>
<div class="c" style="left:858px;width:88px;top:829px;text-align:center">1.03%</div>
<div class="c" style="left:946px;width:110px;top:829px;text-align:center">0.39</div>
<div class="cb" style="left:40px;top:858px;border-color:#000"></div>
<div class="c" style="left:83px;top:858px">S09</div>
<div class="c" style="left:215px;top:858px">1. BODRUM</div>
<div class="c" style="left:402px;top:858px">60 cm</div>
<div class="c" style="left:479px;top:858px">30 cm</div>
<div class="c" style="left:550px;width:88px;top:858px;text-align:center">6 ø 14</div>
<div class="c" style="left:638px;width:88px;top:858px;text-align:center">6 ø 14</div>
<div class="c" style="left:726px;width:132px;top:858px;text-align:center">ø8/15/10/10/10</div>
<div class="c" style="left:858px;width:88px;top:858px;text-align:center">1.03%</div>
<div class="c" style="left:946px;width:110px;top:858px;text-align:center">0.63</div>
<div class="cb" style="left:40px;top:887px;border-color:#000"></div>
<div class="c" style="left:83px;top:887px">S10</div>
<div class="c" style="left:215px;top:887px">3. KAT</div>
<div class="c" style="left:402px;top:887px">60 cm</div>
<div class="c" style="left:479px;top:887px">30 cm</div>
<div class="c" style="left:550px;width:88px;top:887px;text-align:center">6 ø 14</div>
<div class="c" style="left:638px;width:88px;top:887px;text-align:center">6 ø 14</div>
<div class="c" style="left:726px;width:132px;top:887px;text-align:center">ø8/10/10/10</div>
<div class="c" style="left:858px;width:88px;top:887px;text-align:center">1.03%</div>
<div class="c" style="left:946px;width:110px;top:887px;text-align:center">0.24</div>
<div class="cb" style="left:40px;top:916px;border-color:#000"></div>
<div class="c" style="left:83px;top:916px">S10</div>
<div class="c" style="left:215px;top:916px">2. KAT</div>
<div class="c" style="left:402px;top:916px">60 cm</div>
<div class="c" style="left:479px;top:916px">30 cm</div>
<div class="c" style="left:550px;width:88px;top:916px;text-align:center">6 ø 14</div>
<div class="c" style="left:638px;width:88px;top:916px;text-align:center">6 ø 14</div>
<div class="c" style="left:726px;width:132px;top:916px;text-align:center">ø8/10/10/10</div>
<div class="c" style="left:858px;width:88px;top:916px;text-align:center">1.03%</div>
<div class="c" style="left:946px;width:110px;top:916px;text-align:center">0.29</div>
<div class="cb" style="left:40px;top:945px;border-color:#000"></div>
<div class="c" style="left:83px;top:945px">S10</div>
<div class="c" style="left:215px;top:945px">1. KAT</div>
<div class="c" style="left:402px;top:945px">60 cm</div>
<div class="c" style="left:479px;top:945px">30 cm</div>
<div class="c" style="left:550px;width:88px;top:945px;text-align:center">6 ø 14</div>
<div class="c" style="left:638px;width:88px;top:945px;text-align:center">6 ø 14</div>
<div class="c" style="left:726px;width:132px;top:945px;text-align:center">ø8/10/10/10</div>
<div class="c" style="left:858px;width:88px;top:945px;text-align:center">1.03%</div>
<div class="c" style="left:946px;width:110px;top:945px;text-align:center">0.39</div>
<div class="cb" style="left:40px;top:974px;border-color:#000"></div>
<div class="c" style="left:83px;top:974px">S10</div>
<div class="c" style="left:215px;top:974px">ZEMİN KAT</div>
<div class="c" style="left:402px;top:974px">60 cm</div>
<div class="c" style="left:479px;top:974px">30 cm</div>
<div class="c" style="left:550px;width:88px;top:974px;text-align:center">6 ø 14</div>
<div class="c" style="left:638px;width:88px;top:974px;text-align:center">6 ø 14</div>
<div class="c" style="left:726px;width:132px;top:974px;text-align:center">ø8/10/10/10</div>
<div class="c" style="left:858px;width:88px;top:974px;text-align:center">1.03%</div>
<div class="c" style="left:946px;width:110px;top:974px;text-align:center">0.42</div>
<div class="a" style="left:32px;top:994px;width:1103px;height:27px;background:#f0f0f0"></div>
<div class="a" style="left:1109px;top:107px;width:25px;height:914px;background:#f0f0f0"></div>
<svg class="a" style="left:1115px;top:116px" width="13" height="10"><path d="M1 9L6.5 1.5L12 9Z" fill="#dcdcdc" stroke="#dcdcdc" stroke-linejoin="round"/></svg>
<div class="a" style="left:1119px;top:402px;width:5px;height:196px;border-radius:3px;background:#858585"></div>
<div class="a" style="left:59px;top:1005px;width:1000px;height:5px;border-radius:3px;background:#858585"></div>
<div class="a" style="left:1156px;top:105px;width:644px;height:917px;border:1px solid #6e6e6e;background:#fff"></div>
<svg class="a" style="left:0;top:0" width="1836" height="1100" font-family="Liberation Sans, sans-serif">
<text transform="translate(1478,315.9) scale(1.02,1.056)" font-size="59.3" fill="#ff0000" text-anchor="middle">S206 (60/30)</text>
<text transform="translate(1478.3,365.8) scale(1.017,1.045)" font-size="49" fill="#000" text-anchor="middle">Majör 6Φ14</text>
<text transform="translate(1478.3,408.6) scale(1.017,1.045)" font-size="49" fill="#000" text-anchor="middle">Minör 6Φ14</text>
<text transform="translate(1477.9,452.3) scale(1.017,1.0)" font-size="49.4" fill="#000" text-anchor="middle">Etr. Φ8/10/10/10</text>
<g stroke="#8f8f8f" stroke-width="1" fill="none">
<path d="M1276 524.5H1698"/>
<path d="M1291.5 516V543"/><circle cx="1291.5" cy="524.5" r="5" fill="none"/>
<path d="M1405.5 516V543"/><circle cx="1405.5" cy="524.5" r="5" fill="none"/>
<path d="M1476.5 516V543"/><circle cx="1476.5" cy="524.5" r="5" fill="none"/>
<path d="M1591.5 516V543"/><circle cx="1591.5" cy="524.5" r="5" fill="none"/>
<path d="M1684.5 516V543"/><circle cx="1684.5" cy="524.5" r="5" fill="none"/>
<path d="M1219.5 582V789"/>
<path d="M1211 595.5H1238"/><circle cx="1219.5" cy="595.5" r="5" fill="none"/>
<path d="M1211 674.5H1238"/><circle cx="1219.5" cy="674.5" r="5" fill="none"/>
<path d="M1211 774.5H1238"/><circle cx="1219.5" cy="774.5" r="5" fill="none"/>
<path d="M1755.5 564V806"/>
<path d="M1737 578.5H1764"/><circle cx="1755.5" cy="578.5" r="5" fill="none"/>
<path d="M1737 792.5H1764"/><circle cx="1755.5" cy="792.5" r="5" fill="none"/>
<path d="M1258 845.5H1716"/>
<path d="M1273.5 828V854"/><circle cx="1273.5" cy="845.5" r="5" fill="none"/>
<path d="M1701.5 828V854"/><circle cx="1701.5" cy="845.5" r="5" fill="none"/>
</g>
<g fill="#383838" font-size="30" text-anchor="middle">
<text transform="translate(1348.3,519) scale(1.055,1.15)">16.0</text>
<text transform="translate(1441.4,519) scale(1.055,1.15)">10.0</text>
<text transform="translate(1534.2,519) scale(1.055,1.15)">16.0</text>
<text transform="translate(1638.3,519) scale(1.055,1.15)">13.0</text>
<text transform="translate(1215.2,634.5) rotate(-90) scale(1.12,1.14)">11.0</text>
<text transform="translate(1215.2,723.8) rotate(-90) scale(1.12,1.14)">14.0</text>
<text transform="translate(1749.9,684.9) rotate(-90) scale(1.067,1.13)" font-size="47">30</text>
<text transform="translate(1486.4,840.7) scale(1.04)" font-size="47.5">60</text>
</g>
<g transform="translate(1478.3,365.8) scale(1.017,1.045)" fill="#fff"><rect x="76.00" y="-4.36" width="10.19" height="6.36"/><rect x="90.72" y="-4.36" width="9.79" height="6.36"/></g>
<g transform="translate(1478.3,408.6) scale(1.017,1.045)" fill="#fff"><rect x="76.00" y="-4.36" width="10.19" height="6.36"/><rect x="90.72" y="-4.36" width="9.79" height="6.36"/></g>
<g transform="translate(1477.9,452.3) scale(1.017,1.0)" fill="#fff"><rect x="-9.88" y="-4.39" width="10.27" height="6.39"/><rect x="4.96" y="-4.39" width="9.86" height="6.39"/></g>
<g transform="translate(1477.9,452.3) scale(1.017,1.0)" fill="#fff"><rect x="58.79" y="-4.39" width="10.27" height="6.39"/><rect x="73.62" y="-4.39" width="9.86" height="6.39"/></g>
<g transform="translate(1477.9,452.3) scale(1.017,1.0)" fill="#fff"><rect x="127.45" y="-4.39" width="10.27" height="6.39"/><rect x="142.29" y="-4.39" width="9.86" height="6.39"/></g>
<g transform="translate(1348.3,519) scale(1.055,1.15)" fill="#fff"><rect x="-28.18" y="-2.94" width="6.43" height="4.94"/><rect x="-18.89" y="-2.94" width="6.22" height="4.94"/></g>
<g transform="translate(1441.4,519) scale(1.055,1.15)" fill="#fff"><rect x="-28.18" y="-2.94" width="6.43" height="4.94"/><rect x="-18.89" y="-2.94" width="6.22" height="4.94"/></g>
<g transform="translate(1534.2,519) scale(1.055,1.15)" fill="#fff"><rect x="-28.18" y="-2.94" width="6.43" height="4.94"/><rect x="-18.89" y="-2.94" width="6.22" height="4.94"/></g>
<g transform="translate(1638.3,519) scale(1.055,1.15)" fill="#fff"><rect x="-28.18" y="-2.94" width="6.43" height="4.94"/><rect x="-18.89" y="-2.94" width="6.22" height="4.94"/></g>
<g transform="translate(1215.2,634.5) rotate(-90) scale(1.12,1.14)" fill="#fff"><rect x="-27.06" y="-2.94" width="6.43" height="4.94"/><rect x="-17.78" y="-2.94" width="6.22" height="4.94"/></g>
<g transform="translate(1215.2,634.5) rotate(-90) scale(1.12,1.14)" fill="#fff"><rect x="-12.62" y="-2.94" width="6.43" height="4.94"/><rect x="-3.33" y="-2.94" width="6.22" height="4.94"/></g>
<g transform="translate(1215.2,723.8) rotate(-90) scale(1.12,1.14)" fill="#fff"><rect x="-28.18" y="-2.94" width="6.43" height="4.94"/><rect x="-18.89" y="-2.94" width="6.22" height="4.94"/></g>
<rect x="1273.5" y="578.5" width="428" height="214" fill="none" stroke="#d09c6c" stroke-width="1"/>
<g fill="none" stroke="#4cc4d0" stroke-width="1">
<rect x="1291.5" y="595.5" width="393" height="179" rx="9"/>
<path d="M1292 759.5L1319 731.5M1310 771L1335 746.5"/>
</g>
<g fill="none" stroke="#4cc44c" stroke-width="1">
<path d="M1361 620.5L1385 597A11 11 0 0 1 1405.5 604V767A11 11 0 0 1 1395 778.5H1359"/>
<path d="M1361 620.5L1385 597A11 11 0 0 1 1405.5 604V767A11 11 0 0 1 1395 778.5H1359" transform="translate(186,0)"/>
<path d="M1522 592.5H1490A13 13 0 0 0 1476.5 605V766A12 12 0 0 0 1488 778.5L1495.5 772.5L1520.5 749.5"/>
<path d="M1295 674.5H1680A8 8 0 0 1 1687.5 682V719.5M1295 674.5A9 9 0 0 0 1287.5 684.5L1291 693.5L1315.5 718.5"/>
</g>
<g fill="#7d2a84">
<circle cx="1301" cy="606" r="6.9"/>
<circle cx="1301" cy="762.8" r="6.9"/>
<circle cx="1393.8" cy="606" r="6.9"/>
<circle cx="1393.8" cy="762.8" r="6.9"/>
<circle cx="1486.8" cy="606" r="6.9"/>
<circle cx="1486.8" cy="762.8" r="6.9"/>
<circle cx="1579.6" cy="606" r="6.9"/>
<circle cx="1579.6" cy="762.8" r="6.9"/>
<circle cx="1673" cy="606" r="6.9"/>
<circle cx="1673" cy="762.8" r="6.9"/>
<circle cx="1301" cy="684.6" r="6.9"/>
<circle cx="1673" cy="684.6" r="6.9"/>
</g>
</svg>
<div class="btn" style="left:439px;width:204px">Donatı Hesap Makinesi</div>
<div class="btn" style="left:824px;width:111px">Seç</div>
<div class="btn" style="left:1078px;width:111px">&lt;&lt;</div>
<div class="btn" style="left:1205px;width:111px">&gt;&gt;</div>
<div class="btn" style="left:1332px;width:111px">Filtre</div>
<div class="btn" style="left:1459px;width:111px">Betonarme</div>
<div class="btn" style="left:1586px;width:111px;border:1px solid #0067c0">Tamam</div>
<div class="btn" style="left:1708px;width:111px">İptal</div>
<div class="a" style="left:662px;top:1057px;width:20px;height:20px;border:1px solid #5e5e5e;border-radius:4px;background:#f2f2f2"></div>
<div class="t" style="left:686px;top:1058px;font-size:15.5px;line-height:20px">Mantoları Göster</div>
<div class="a" style="left:950px;top:1057px;width:20px;height:20px;border-radius:4px;background:#0064bc"></div>
<svg class="a" style="left:950px;top:1057px" width="20" height="20"><path d="M5 10.5L8.7 14.2L15 7.5" fill="none" stroke="#fff" stroke-width="1.1"/></svg>
<div class="t" style="left:974px;top:1058px;font-size:15.6px;line-height:20px">Tüm Katlar</div>
</body></html>
